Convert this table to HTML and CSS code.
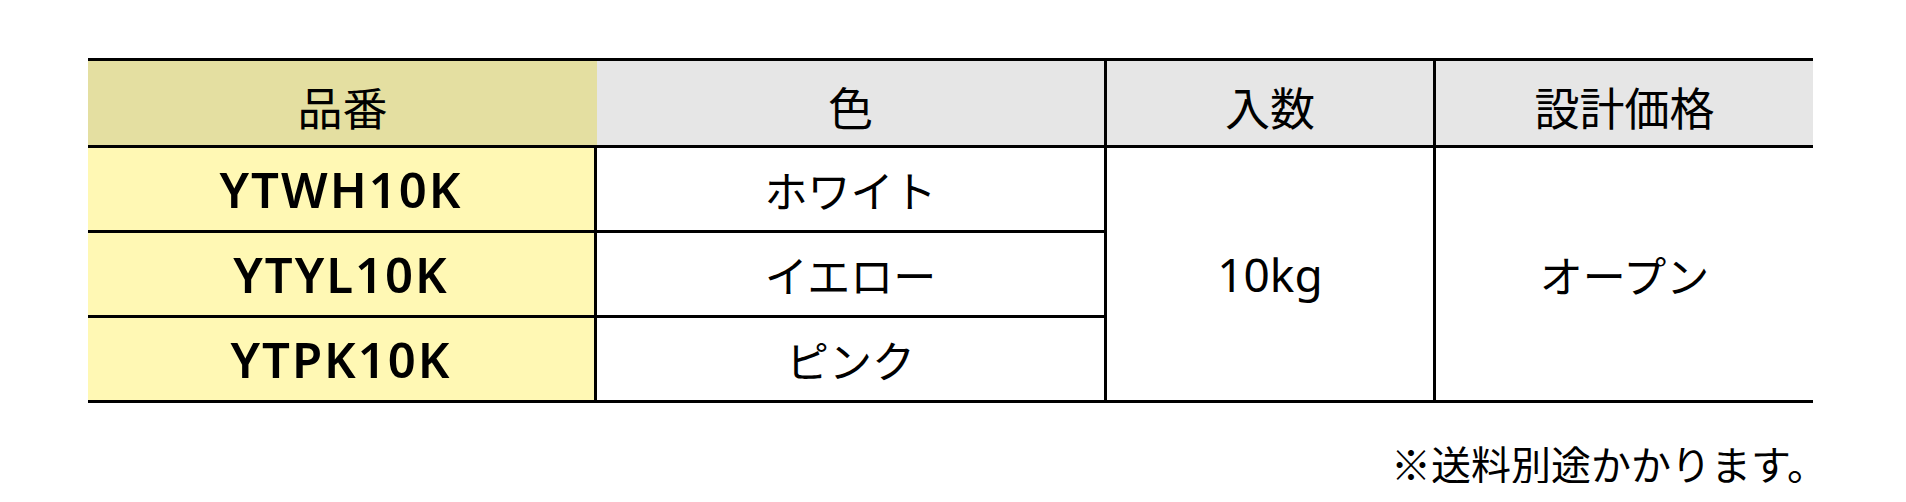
FILE: index.html
```html
<!DOCTYPE html>
<html lang="ja">
<head>
<meta charset="utf-8">
<title>商品表</title>
<link rel="stylesheet" href="styles.css">
</head>
<body>
<div class="wrap">
  <table class="spec">
    <colgroup>
      <col class="c-code">
      <col class="c-color">
      <col class="c-qty">
      <col class="c-price">
    </colgroup>
    <thead>
      <tr class="head">
        <th class="h-code">品番</th>
        <th class="h-gray sep">色</th>
        <th class="h-gray sep">入数</th>
        <th class="h-gray">設計価格</th>
      </tr>
    </thead>
    <tbody>
      <tr class="row">
        <td class="code sep">YTWH10K</td>
        <td class="jp sep">ホワイト</td>
        <td class="num sep" rowspan="3">10kg</td>
        <td class="jp" rowspan="3">オープン</td>
      </tr>
      <tr class="row">
        <td class="code sep">YTYL10K</td>
        <td class="jp sep">イエロー</td>
      </tr>
      <tr class="row">
        <td class="code sep">YTPK10K</td>
        <td class="jp sep">ピンク</td>
      </tr>
    </tbody>
  </table>
  <p class="note">※送料別途かかります。</p>
</div>
</body>
</html>
```

FILE: styles.css
```css
html, body {
  margin: 0;
  padding: 0;
  background: #ffffff;
}

body {
  font-family: "Noto Sans", "Noto Sans CJK JP", sans-serif;
  color: #000000;
}

.wrap {
  padding: 58px 0 0 88px;
  width: 1725px;
}

.spec {
  border-collapse: separate;
  border-spacing: 0;
  table-layout: fixed;
  width: 1725px;
}

.c-code { width: 509px; }
.c-color { width: 510px; }
.c-qty { width: 329px; }
.c-price { width: 377px; }

.spec th,
.spec td {
  padding: 0;
  text-align: center;
  vertical-align: middle;
  border-bottom: 3px solid #000;
  line-height: 1;
}

.spec th {
  border-top: 3px solid #000;
  font-weight: 400;
  font-size: 45px;
  font-family: "Noto Sans CJK JP", sans-serif;
  padding-top: 6px;
}

.spec .sep {
  border-right: 3px solid #000;
}

.head {
  height: 90px;
}

.row {
  height: 85px;
}

.h-code {
  background: #e4dfa1;
}

.h-gray {
  background: #e6e6e6;
}

.code {
  background: #fff8b4;
  font-family: "Noto Sans", sans-serif;
  font-weight: 600;
  font-size: 49px;
  letter-spacing: 2px;
  padding-top: 4px;
}

.jp {
  font-family: "Noto Sans CJK JP", sans-serif;
  font-size: 43px;
  padding-top: 4px;
}

.num {
  font-family: "Noto Sans", sans-serif;
  font-size: 46px;
  padding-top: 4px;
}

.note {
  margin: 40px -14px 0 0;
  text-align: right;
  font-family: "Noto Sans CJK JP", sans-serif;
  font-size: 40px;
  line-height: 1;
}
```
